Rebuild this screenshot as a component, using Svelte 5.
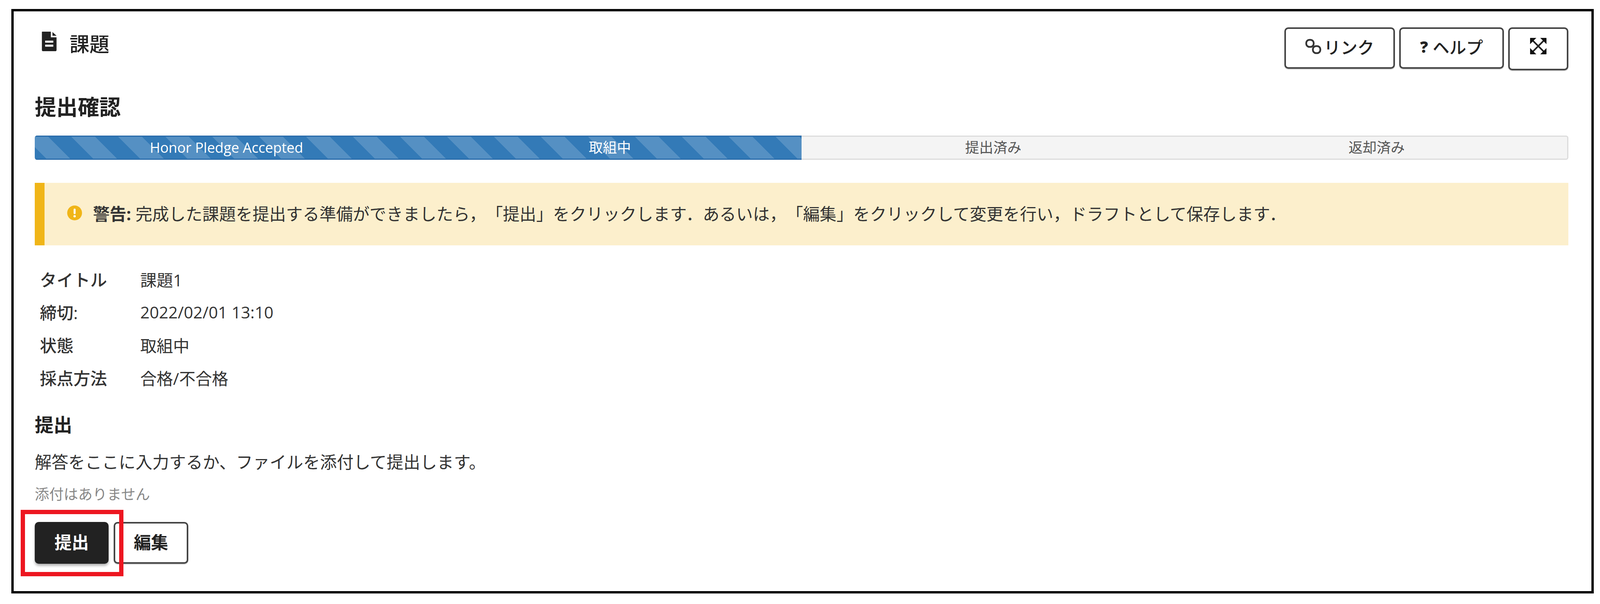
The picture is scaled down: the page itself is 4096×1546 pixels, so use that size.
<script>
  const meta = [
    ['タイトル', '課題1'],
    ['締切:', '2022/02/01 13:10'],
    ['状態', '取組中'],
    ['採点方法', '合格/不合格']
  ];
</script>

<div class="frame">
  <header class="head">
    <h1 class="title">
      <svg class="file" viewBox="0 0 36 48" aria-hidden="true">
        <path fill="#222" fill-rule="evenodd" d="M0 1a1 1 0 0 1 1-1h21v14h14v31a3 3 0 0 1-3 3H3a3 3 0 0 1-3-3zM8 22v5h20v-5zM8 32v5h20v-5z"/>
        <path fill="#222" d="M26 1l10 9H26z"/>
      </svg>
      <span>課題</span>
    </h1>
    <div class="tools">
      <button class="btn link">
        <svg class="ic" viewBox="0 0 42 42" aria-hidden="true">
          <g fill="none" stroke="#333" stroke-width="4.500">
            <rect x="3" y="4" width="19" height="18" rx="8"/>
            <rect x="20" y="20" width="19" height="18" rx="8"/>
          </g>
        </svg>
        リンク
      </button>
      <button class="btn help"><b class="q">?</b> ヘルプ</button>
      <button class="btn expand" aria-label="全画面">
        <svg viewBox="0 0 44 44" aria-hidden="true">
          <path d="M8 8l28 28M36 8L8 36" stroke="#222" stroke-width="4" fill="none"/>
          <path fill="#111" d="M1 2a1 1 0 0 1 1-1h15L1 17zM43 2v15L27 1h15a1 1 0 0 1 1 1zM1 42V27l16 16H2a1 1 0 0 1-1-1zM43 42a1 1 0 0 1-1 1H27l16-16z"/>
        </svg>
      </button>
    </div>
  </header>

  <h2 class="h-confirm">提出確認</h2>

  <div class="progress">
    <div class="done">
      <div class="step">Honor Pledge Accepted</div>
      <div class="step">取組中</div>
    </div>
    <div class="step">提出済み</div>
    <div class="step">返却済み</div>
  </div>

  <div class="alert">
    <svg class="warn" viewBox="0 0 38 38" aria-hidden="true">
      <circle cx="19" cy="19" r="19" fill="#f0b518"/>
      <rect x="16.500" y="8" width="5" height="14" rx="2" fill="#fff"/>
      <circle cx="19" cy="27.500" r="3" fill="#fff"/>
    </svg>
    <p><strong>警告:</strong> 完成した課題を提出する準備ができましたら，「提出」をクリックします．あるいは，「編集」をクリックして変更を行い，ドラフトとして保存します．</p>
  </div>

  <dl class="meta">
    {#each meta as [k, v]}
      <dt>{k}</dt>
      <dd>{v}</dd>
    {/each}
  </dl>

  <h3 class="h-submit">提出</h3>
  <p class="lead">解答をここに入力するか、ファイルを添付して提出します。</p>
  <p class="none">添付はありません</p>

  <div class="actions">
    <button class="btn primary">提出</button>
    <button class="btn edit">編集</button>
  </div>

  <div class="mark"></div>
</div>

<style>
  :global(body) {
    margin: 0;
    background: #fff;
  }
  .frame {
    position: relative;
    box-sizing: border-box;
    width: 4051px;
    height: 1496px;
    margin: 23px 0 0 29px;
    padding: 41px 59px 0 54px;
    border: 6px solid #000;
    background: #fff;
    box-shadow: inset 4px 4px 0 #f6f6f6;
    font-family: "Open Sans", "Noto Sans CJK JP", sans-serif;
    font-size: 43px;
    color: #333;
    text-spacing-trim: space-all;
  }
  h1, h2, h3, p, dl, dd {
    margin: 0;
  }
  .head {
    display: flex;
    justify-content: space-between;
    align-items: flex-start;
    height: 110px;
  }
  .title {
    display: flex;
    align-items: flex-start;
    gap: 30px;
    margin: 7px 0 0 15px;
    font-size: 51px;
    line-height: 70px;
    font-weight: 500;
    color: #222;
  }
  .file {
    width: 44px;
    height: 50px;
    margin-top: 4px;
  }
  .tools {
    display: flex;
    align-items: flex-start;
    gap: 11px;
  }
  .btn {
    box-sizing: border-box;
    display: inline-flex;
    align-items: center;
    justify-content: center;
    height: 106px;
    padding: 0 0 8px;
    border: 4px solid #444;
    border-radius: 10px;
    background: #fff;
    font: inherit;
    font-weight: 500;
    color: #222;
    box-shadow: 0 2px 2px rgba(0, 0, 0, 0.2);
  }
  .link { width: 283px; gap: 6px; }
  .help { width: 268px; gap: 12px; }
  .expand { width: 154px; height: 110px; padding-bottom: 14px; }
  .expand svg { width: 44px; height: 44px; }
  .ic { width: 42px; height: 42px; }
  .q { font-weight: 800; font-size: 40px; }
  .h-confirm {
    margin-top: 63px;
    font-size: 55px;
    line-height: 60px;
    font-weight: 700;
    color: #222;
  }
  .progress {
    display: flex;
    height: 62px;
    margin-top: 44px;
    background: #f4f4f4;
    border-radius: 6px;
    box-shadow: inset 0 0 0 3px #dcdcdc;
    overflow: hidden;
  }
  .done {
    flex: 2;
    display: flex;
    background: repeating-linear-gradient(45deg, #337ab7 0 23px, #5590c3 23px 66px, #337ab7 66px 85px);
    box-shadow: inset 0 3px 0 #2a6cab, inset 0 -3px 0 #2a6cab;
  }
  .step {
    flex: 1;
    text-align: center;
    font-size: 36px;
    line-height: 62px;
    color: #555;
  }
  .done .step {
    color: #fff;
  }
  .alert {
    box-sizing: border-box;
    display: flex;
    align-items: center;
    gap: 28px;
    height: 160px;
    margin-top: 59px;
    padding: 0 0 6px 58px;
    border-left: 25px solid #f0b518;
    background: #fcefcc;
    font-size: 42.800px;
    color: #333;
  }
  .warn {
    flex: none;
    width: 38px;
    height: 38px;
  }
  .meta {
    display: grid;
    grid-template-columns: 257px 1fr;
    grid-auto-rows: 84px;
    align-items: center;
    margin-top: 44px;
    padding-left: 13px;
  }
  dd {
    font-size: 42px;
  }
  dt {
    font-weight: 500;
  }
  .h-submit {
    margin-top: 49px;
    font-size: 48px;
    line-height: 60px;
    font-weight: 700;
    color: #222;
  }
  .lead {
    margin-top: 36px;
    line-height: 60px;
  }
  .none {
    margin-top: 27px;
    font-size: 37px;
    line-height: 50px;
    color: #888;
  }
  .actions {
    display: flex;
    gap: 13px;
    margin-top: 46px;
  }
  .actions .btn {
    height: 107px;
    font-size: 44px;
    font-weight: 700;
  }
  .actions .primary {
    width: 189px;
    border-color: #222;
    background: #222;
    color: #fff;
    box-shadow: 0 5px 6px rgba(0, 0, 0, 0.3);
  }
  .edit { width: 191px; }
  .mark {
    position: absolute;
    left: 18px;
    top: 1276px;
    box-sizing: border-box;
    width: 263px;
    height: 170px;
    border: 11px solid #ed1620;
  }
</style>
